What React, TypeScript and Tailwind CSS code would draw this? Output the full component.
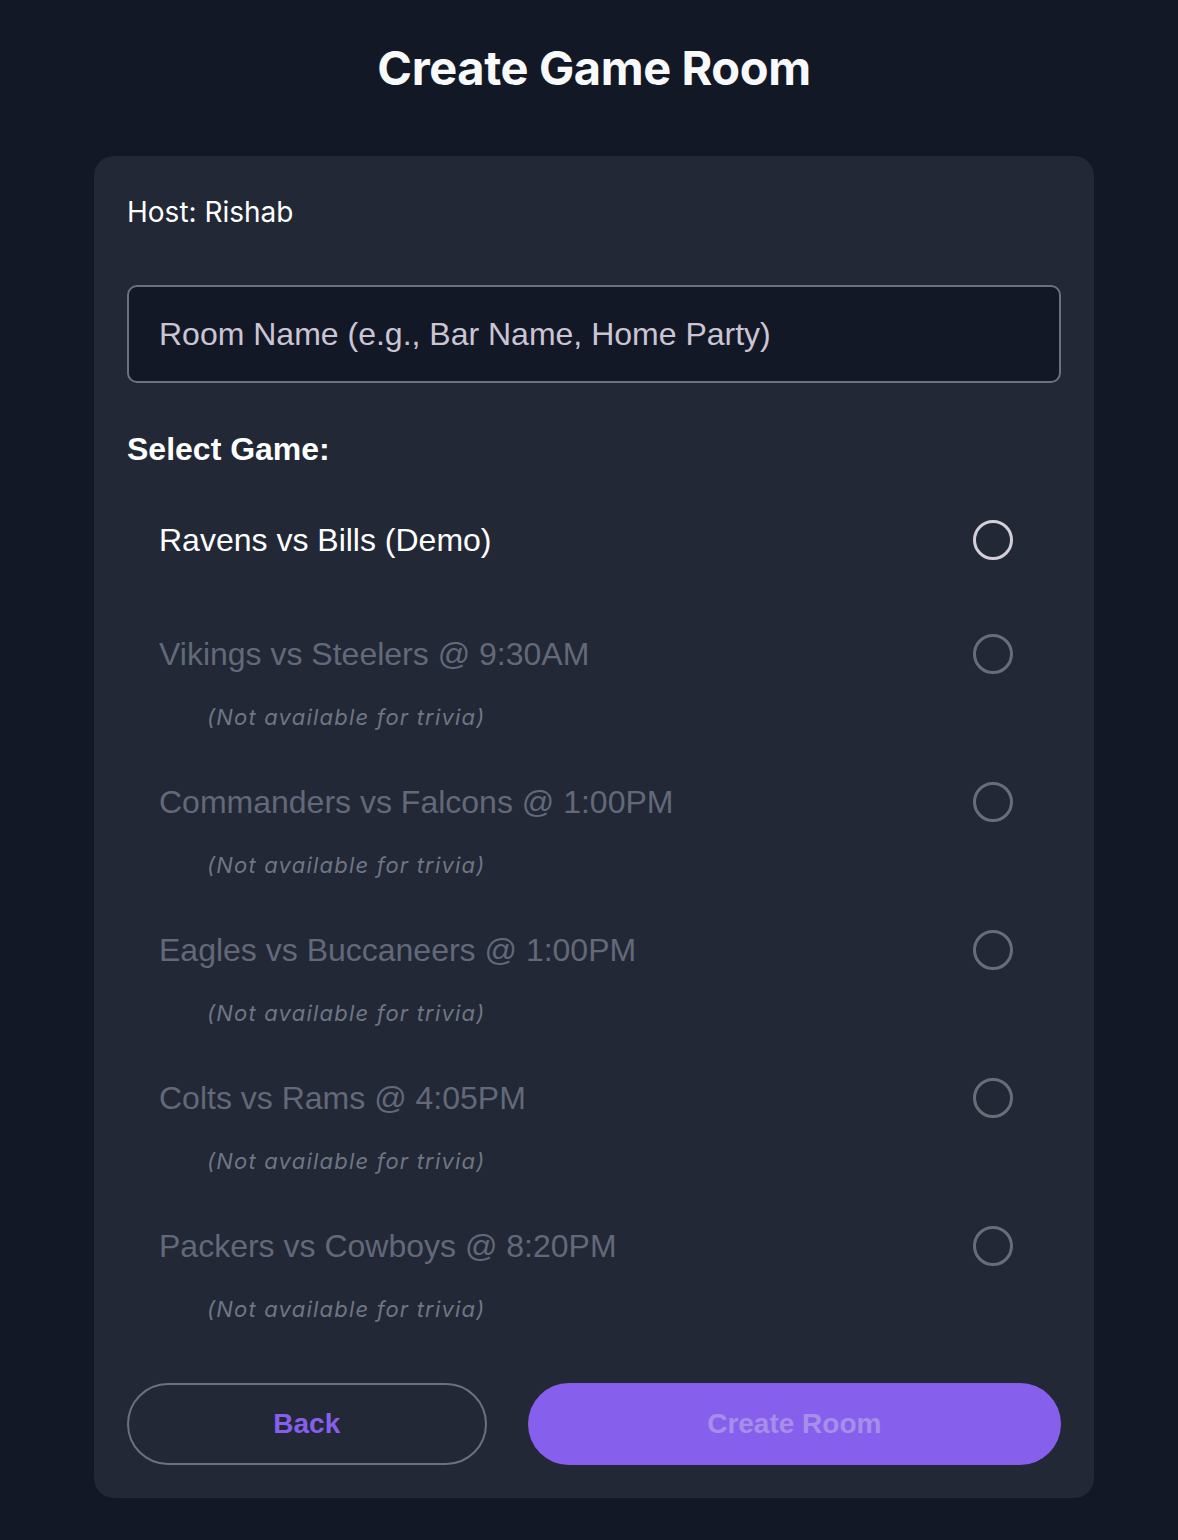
import React from 'react';

interface Game {
  id: string;
  label: string;
  available: boolean;
}

const games: Game[] = [
  { id: 'demo', label: 'Ravens vs Bills (Demo)', available: true },
  { id: 'g1', label: 'Vikings vs Steelers @ 9:30AM', available: false },
  { id: 'g2', label: 'Commanders vs Falcons @ 1:00PM', available: false },
  { id: 'g3', label: 'Eagles vs Buccaneers @ 1:00PM', available: false },
  { id: 'g4', label: 'Colts vs Rams @ 4:05PM', available: false },
  { id: 'g5', label: 'Packers vs Cowboys @ 8:20PM', available: false },
];

const helv = "font-['Liberation_Sans',Arial,sans-serif]";
const inter = "font-['Inter','Noto_Sans',sans-serif]";

function GameOption({ game }: { game: Game }) {
  return (
    <div className={`flex flex-col px-8 pr-[48px] py-[25px] ${game.available ? 'pb-[49px]' : ''}`}>
      <div className="flex items-center justify-between">
        <span
          className={`${helv} text-[32px] leading-[40px] ${
            game.available ? 'text-white' : 'text-[#626979]'
          }`}
        >
          {game.label}
        </span>
        {/* radio */}
        <span
          className={`w-10 h-10 rounded-full border-[3px] ${
            game.available ? 'border-[#d3cfda]' : 'border-[#6a6d77]'
          }`}
        />
      </div>
      {!game.available && (
        <span
          className={`${inter} italic text-[22px] leading-[30px] tracking-[1.2px] text-[#6f7684] mt-[28px] pl-12`}
        >
          (Not available for trivia)
        </span>
      )}
    </div>
  );
}

export default function App() {
  return (
    <div className="min-h-[1540px] bg-[#131826] flex flex-col items-center pt-10 pl-[10px]">
      <h1 className={`${inter} text-[47px] leading-[56px] font-bold text-[#f8f9fb] tracking-[-0.4px]`}>
        Create Game Room
      </h1>

      <div className="mt-[60px] w-[1000px] bg-[#222836] rounded-[20px] px-[33px] pt-[33px] pb-[33px]">
        <p className={`${inter} text-[28px] leading-[46px] font-normal text-white`}>Host: Rishab</p>

        <input
          type="text"
          placeholder="Room Name (e.g., Bar Name, Home Party)"
          className={`${helv} mt-[50px] w-full h-[98px] rounded-[10px] border-2 border-[#6b7180] bg-[#131826] px-[30px] text-[32px] text-white placeholder:text-[#cbc5d3] outline-none`}
        />

        <h2 className={`${helv} mt-[46px] text-[32px] leading-[40px] font-bold text-white`}>Select Game:</h2>

        <div className="mt-[26px] flex flex-col">
          {games.map((g) => (
            <GameOption key={g.id} game={g} />
          ))}
        </div>

        <div className="mt-[34px] flex gap-[41px]">
          <button
            className={`${helv} flex-[2] h-[82px] rounded-full border-2 border-[#6b7180] text-[28px] font-bold text-[#8660ec]`}
          >
            Back
          </button>
          <button
            className={`${helv} flex-[3] h-[82px] rounded-full bg-[#8660ec] text-[28px] font-bold text-[#a78eea]`}
          >
            Create Room
          </button>
        </div>
      </div>
    </div>
  );
}
